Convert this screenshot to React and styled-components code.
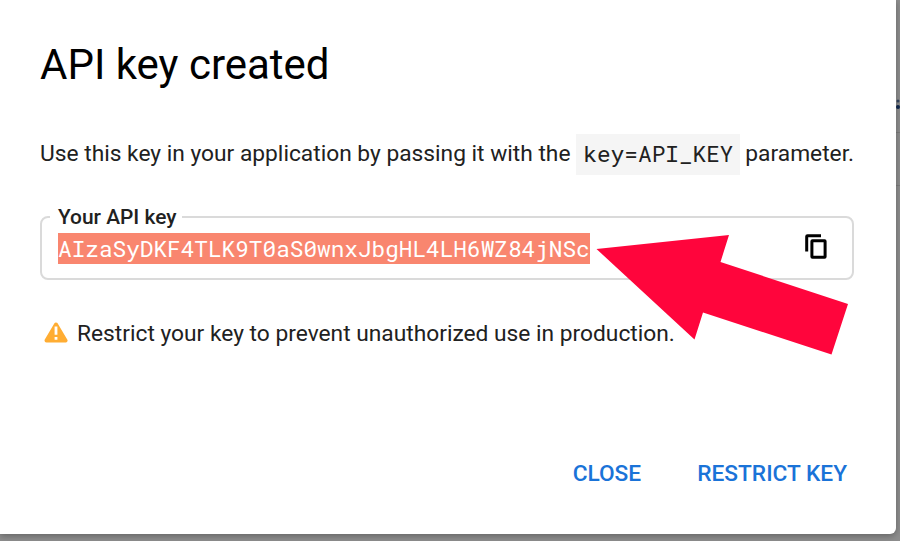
import React from 'react';
import styled, { createGlobalStyle } from 'styled-components';

const App = () => {
  return (
    <Backdrop>
      <GlobalStyle />
      <Dialog>
        <Title>API key created</Title>
        <Description>
          <span>Use this key in your application by passing it with the</span>
          <Code>key=API_KEY</Code>
          <span>parameter.</span>
        </Description>
        <KeyField>
          <KeyLabel>Your API key</KeyLabel>
          <KeyRow>
            <KeyValue>AIzaSyDKF4TLK9T0aS0wnxJbgHL4LH6WZ84jNSc</KeyValue>
            <CopyButton aria-label="Copy">
              <CopyIcon />
            </CopyButton>
          </KeyRow>
        </KeyField>
        <Warning>
          <WarningIcon />
          <span>Restrict your key to prevent unauthorized use in production.</span>
        </Warning>
        <Actions>
          <ActionButton>CLOSE</ActionButton>
          <ActionButton>RESTRICT KEY</ActionButton>
        </Actions>
      </Dialog>
      <PageEdge>
        <PageMark />
        <PageLine />
        <PageLine />
      </PageEdge>
      <Arrow viewBox="0 0 252 120">
        <path d="M0.5 14 L133 0 L124.5 27 L252 69 L235.5 119.5 L107 77.5 L98.5 104.5 Z" />
      </Arrow>
    </Backdrop>
  );
}

const CopyIcon = () => (
  <svg width="22" height="25" viewBox="0 0 22 25" fill="none" stroke="#000" strokeWidth="3">
    <path d="M1.7 17.5 V2.5 Q1.7 1.7 2.5 1.7 H16" />
    <rect x="6.9" y="6.7" width="13.2" height="16.6" rx="0.5" />
  </svg>
);

const WarningIcon = () => (
  <svg width="24" height="22" viewBox="0 0 24 22">
    <path d="M12 2.5 L21.5 18.5 H2.5 Z" fill="#ffad33" stroke="#ffad33" strokeWidth="4" strokeLinejoin="round" />
    <path d="M10.6 4.5 h2.8 v8.2 h-2.8 z M10.6 15 h2.8 v2.8 h-2.8 z" fill="#fff" />
  </svg>
);

const PageMark = () => (
  <svg width="4" height="16" viewBox="0 0 4 16" fill="#10284f">
    <ellipse cx="2" cy="6" rx="1.5" ry="1.5" opacity="0.7" />
    <ellipse cx="2" cy="12" rx="2" ry="2" />
  </svg>
);

export default App;


const GlobalStyle = createGlobalStyle`
  body {
    margin: 0;
    overflow: hidden;
    font-family: Roboto, "Liberation Sans", sans-serif;
  }
`;

const Backdrop = styled.div`
  position: relative;
  display: flex;
  align-items: flex-start;
  width: 900px;
  height: 541px;
  background: #8e8e8e;
  overflow: hidden;
`;

const Dialog = styled.div`
  position: relative;
  z-index: 1;
  display: flex;
  flex-direction: column;
  box-sizing: border-box;
  width: 896px;
  height: 534px;
  padding: 36px 42px 0 40px;
  background: #fff;
  border-radius: 0 0 6px 0;
  box-shadow: 0 2px 7px rgba(0, 0, 0, 0.3);
`;

const Title = styled.h2`
  margin: 0;
  font-size: 42px;
  font-weight: 400;
  line-height: 58px;
  color: #000;
`;

const Description = styled.p`
  display: flex;
  align-items: center;
  margin: 40px 0 0;
  height: 41px;
  font-size: 22.75px;
  line-height: 40px;
  white-space: nowrap;
  color: #212121;

  > span {
    height: 41px;
  }
`;

const Code = styled.code`
  box-sizing: border-box;
  width: 165px;
  height: 41px;
  margin: 0 5px 0 6px;
  padding-left: 7px;
  background: #f5f5f5;
  font-family: "Roboto Mono", "DejaVu Sans Mono", monospace;
  font-size: 22.73px;
  line-height: 38px;
`;

const KeyField = styled.fieldset`
  box-sizing: border-box;
  width: 814px;
  height: 75px;
  margin: 30px 0 0;
  padding: 0 24px 0 16px;
  border: 2px solid #dadada;
  border-radius: 8px;
`;

const KeyLabel = styled.legend`
  margin-left: -8px;
  padding: 0 6px 0 8px;
  font-size: 20.9px;
  font-weight: 500;
  line-height: 24px;
  color: #212121;
`;

const KeyRow = styled.div`
  display: flex;
  align-items: center;
  justify-content: space-between;
  height: 38px;
`;

const KeyValue = styled.span`
  width: 532px;
  height: 31px;
  background: #f9866f;
  color: #fff;
  font-family: "Roboto Mono", "DejaVu Sans Mono", monospace;
  font-size: 22.73px;
  line-height: 31px;
  white-space: nowrap;
`;

const CopyButton = styled.button`
  display: flex;
  padding: 0 1px 3px 0;
  border: none;
  background: none;
`;

const Warning = styled.div`
  display: flex;
  align-items: center;
  gap: 9px;
  height: 28px;
  margin: 39px 0 0 4px;
  font-size: 22.75px;
  white-space: nowrap;
  color: #212121;
`;

const Actions = styled.div`
  display: flex;
  justify-content: flex-end;
  gap: 56px;
  margin-top: 113px;
  padding-right: 7px;
`;

const ActionButton = styled.button`
  padding: 0;
  border: none;
  background: none;
  font-family: inherit;
  font-size: 22.7px;
  font-weight: 500;
  line-height: 28px;
  color: #1a73d8;
  white-space: nowrap;
`;

const PageEdge = styled.div`
  display: flex;
  flex-direction: column;
  align-items: flex-end;
  flex: 1;
  padding-top: 95px;
`;

const PageLine = styled.div`
  width: 4px;
  height: 1px;
  margin-top: 21px;
  background: #7d7d7d;

  & + & {
    margin-top: 52px;
  }
`;

const Arrow = styled.svg`
  position: absolute;
  z-index: 2;
  left: 596px;
  top: 235px;
  width: 252px;
  height: 120px;
  fill: #ff053c;
`;
